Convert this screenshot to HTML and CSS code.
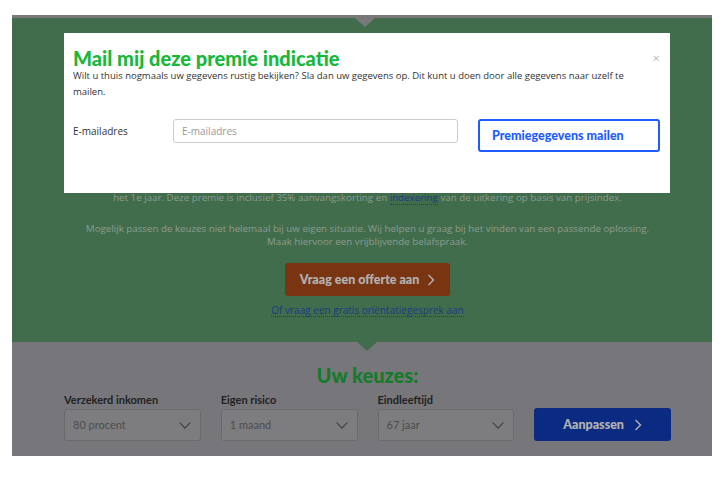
FILE: index.html
```html
<!DOCTYPE html>
<html lang="nl">
<head>
    <meta charset="UTF-8">
    <meta name="viewport" content="width=device-width, initial-scale=1.0">
    <title>Premie indicatie</title>
    <link rel="stylesheet" href="styles.css">
</head>
<body>
    <div class="page">
        <div class="top-strip"></div>

        <div class="result">
            <div class="container">
                <p class="summary">het 1e jaar. Deze premie is inclusief 35% aanvangskorting en <a href="#" class="dotted">indexering</a> van de uitkering op basis van prijsindex.</p>
                <p class="summary">Mogelijk passen de keuzes niet helemaal bij uw eigen situatie. Wij helpen u graag bij het vinden van een passende oplossing.<br>Maak hiervoor een vrijblijvende belafspraak.</p>
                <a href="#" class="btn-offerte">Vraag een offerte aan
                    <svg width="8" height="12" viewBox="0 0 8 12"><path d="M1.5 1 L6.5 6 L1.5 11" fill="none" stroke="currentColor" stroke-width="1.4"/></svg>
                </a>
                <div><a href="#" class="dotted small-link">Of vraag een gratis ori&euml;ntatiegesprek aan</a></div>
            </div>
        </div>

        <div class="choices">
            <div class="container">
                <h2>Uw keuzes:</h2>
                <div class="choice-row">
                    <div class="field">
                        <label>Verzekerd inkomen</label>
                        <div class="select">80 procent <span class="chev"></span></div>
                    </div>
                    <div class="field">
                        <label>Eigen risico</label>
                        <div class="select">1 maand <span class="chev"></span></div>
                    </div>
                    <div class="field">
                        <label>Eindleeftijd</label>
                        <div class="select">67 jaar <span class="chev"></span></div>
                    </div>
                    <button class="btn-aanpassen">Aanpassen
                        <svg width="8" height="12" viewBox="0 0 8 12"><path d="M1.5 1 L6.5 6 L1.5 11" fill="none" stroke="currentColor" stroke-width="1.4"/></svg>
                    </button>
                </div>
            </div>
        </div>

        <div class="backdrop"></div>

        <div class="modal">
            <span class="close">&times;</span>
            <h3>Mail mij deze premie indicatie</h3>
            <p>Wilt u thuis nogmaals uw gegevens rustig bekijken? Sla dan uw gegevens op. Dit kunt u doen door alle gegevens naar uzelf te mailen.</p>
            <div class="mail-row">
                <label for="email">E-mailadres</label>
                <input type="text" id="email" placeholder="E-mailadres">
                <button class="btn-mail">Premiegegevens mailen</button>
            </div>
        </div>
    </div>
</body>
</html>
```

FILE: styles.css
```css
body {
    margin: 0;
    background: #fff;
    font-family: "Open Sans", sans-serif;
}
.page {
    position: relative;
    width: 700px;
    margin: 15px 0 0 12px;
}
.container {
    width: 607px;
    margin-left: 52px;
    text-align: center;
}
.top-strip {
    height: 3px;
    background: #aeaeae;
    position: relative;
}
.top-strip::after {
    content: "";
    position: absolute;
    left: 343px;
    top: 3px;
    border-left: 10px solid transparent;
    border-right: 10px solid transparent;
    border-top: 9px solid #aeaeae;
    z-index: 1;
}
.result {
    position: relative;
    background: #5d9c6d;
    height: 324px;
    padding-top: 173px;
    box-sizing: border-box;
    color: #c6dccb;
}
.result::after {
    content: "";
    position: absolute;
    left: 345px;
    bottom: -9px;
    border-left: 10px solid transparent;
    border-right: 10px solid transparent;
    border-top: 9px solid #5d9c6d;
    z-index: 1;
}
.summary {
    margin: 0 0 18px;
    font-size: 9.75px;
    line-height: 13px;
}
.dotted {
    color: #2b54be;
    text-decoration: none;
    border-bottom: 1px dotted #2b54be;
}
.btn-offerte {
    display: inline-flex;
    align-items: center;
    justify-content: center;
    gap: 8px;
    width: 165px;
    height: 33px;
    box-sizing: border-box;
    background: #ae4c1a;
    color: #fff;
    border-radius: 3px;
    text-decoration: none;
    font-family: Lato, sans-serif;
    font-weight: 900;
    font-size: 12.5px;
    margin-top: -3px;
}
.small-link {
    display: inline-block;
    margin-top: 8px;
    font-size: 10px;
    line-height: 12px;
}
.choices {
    background: #a9aab0;
    height: 114px;
    padding-top: 21px;
    box-sizing: border-box;
}
.choices h2 {
    margin: 0 0 6px;
    font-family: Lato, sans-serif;
    font-weight: 900;
    font-size: 20px;
    line-height: 24px;
    color: #1db03c;
}
.choice-row {
    display: grid;
    grid-template-columns: repeat(4, 1fr);
    gap: 20px;
    align-items: end;
    text-align: left;
}
.field label {
    display: block;
    font-family: Lato, sans-serif;
    font-weight: 700;
    font-size: 11px;
    line-height: 14px;
    color: #313131;
    margin-bottom: 2px;
}
.select {
    position: relative;
    height: 32px;
    box-sizing: border-box;
    border: 1px solid #989898;
    border-radius: 3px;
    background: #b3b4b7;
    padding: 0 8px;
    line-height: 30px;
    font-family: Lato, sans-serif;
    font-size: 11px;
    color: #6e6e6e;
}
.chev {
    position: absolute;
    right: 11px;
    top: 9px;
    width: 7px;
    height: 7px;
    border-right: 1px solid #555;
    border-bottom: 1px solid #555;
    transform: rotate(45deg);
}
.btn-aanpassen {
    height: 33px;
    border: none;
    border-radius: 3px;
    background: #103eba;
    color: #fff;
    font-family: Lato, sans-serif;
    font-weight: 900;
    font-size: 12.5px;
    display: flex;
    align-items: center;
    justify-content: center;
    gap: 10px;
}
.backdrop {
    position: absolute;
    left: 0;
    top: 0;
    right: 0;
    bottom: 0;
    background: rgba(0, 0, 0, 0.3);
    z-index: 2;
}
.modal {
    position: absolute;
    left: 52px;
    top: 18px;
    width: 606px;
    height: 160px;
    box-sizing: border-box;
    background: #fff;
    padding: 16px 10px 0 9px;
    z-index: 3;
}
.modal h3 {
    margin: 0 0 1px;
    font-family: Lato, sans-serif;
    font-weight: 900;
    font-size: 20px;
    line-height: 18px;
    color: #19b83b;
}
.modal p {
    margin: 0;
    max-width: 560px;
    font-size: 9.5px;
    line-height: 16px;
    color: #333;
}
.close {
    position: absolute;
    right: 10px;
    top: 18px;
    font-size: 13px;
    line-height: 14px;
    color: #bbb;
}
.mail-row {
    display: flex;
    align-items: flex-start;
    margin-top: 19px;
}
.mail-row label {
    width: 100px;
    font-size: 10px;
    line-height: 24px;
    color: #333;
}
.mail-row input {
    width: 285px;
    height: 24px;
    box-sizing: border-box;
    border: 1px solid #ccc;
    border-radius: 3px;
    padding: 0 8px;
    font-family: "Open Sans", sans-serif;
    font-size: 10px;
    color: #333;
}
.mail-row input::placeholder {
    color: #999;
}
.btn-mail {
    margin-left: 20px;
    width: 182px;
    height: 33px;
    box-sizing: border-box;
    background: #fff;
    border: 2px solid #1e5cff;
    border-radius: 3px;
    color: #1e5cff;
    font-family: Lato, sans-serif;
    font-weight: 900;
    font-size: 12.5px;
    text-align: left;
    padding: 0 12px;
}
```
